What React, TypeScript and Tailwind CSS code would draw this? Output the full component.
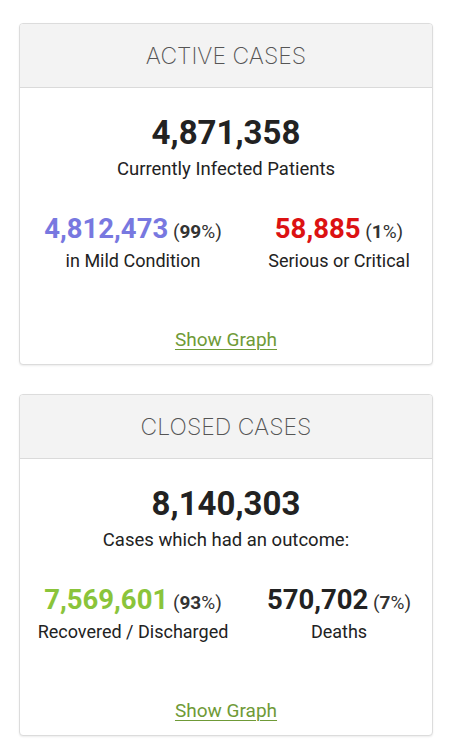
import React from "react";

type Stat = { value: string; pct: string; label: string; color: string };

function Card({
  title,
  total,
  totalLabel,
  left,
  right,
}: {
  title: string;
  total: string;
  totalLabel: string;
  left: Stat;
  right: Stat;
}) {
  const Col = ({ s }: { s: Stat }) => (
    <div className="flex flex-col items-center">
      <div className="leading-[32px] whitespace-nowrap">
        <span className="text-[27.5px] font-bold" style={{ color: s.color }}>
          {s.value}
        </span>
        <span className="text-[19px] text-[#333]">
          {" "}(<b className="font-bold">{s.pct}</b>%)
        </span>
      </div>
      <div className="text-[18px] leading-[24px] text-[#222]">{s.label}</div>
    </div>
  );
  return (
    <div className="ml-[19px] w-[414px] rounded-[4px] border border-[#dcdcdc] bg-white shadow-[0_1px_2px_rgba(0,0,0,0.08)] overflow-hidden">
      <div
        className="bg-[#f3f3f3] border-b border-[#dadada] pt-4 pb-[15px] text-center text-[23px] leading-8 font-extralight text-[#555]"
        style={{ fontFamily: "Inter, Roboto, 'Liberation Sans', sans-serif" }}
      >
        {title}
      </div>
      <div className="pt-[25px] pb-3 flex flex-col items-center">
        <div className="text-[33px] leading-[40px] font-bold text-[#222]">{total}</div>
        <div className="mt-1 text-[18.5px] leading-[24px] text-[#222]">{totalLabel}</div>
        <div className="mt-8 grid w-full grid-cols-[226px_186px]">
          <Col s={left} />
          <Col s={right} />
        </div>
        <a
          href="#"
          className="mt-[55px] text-[19px] leading-[24px] text-[#6f9a37] underline underline-offset-[3px] decoration-1"
        >
          Show Graph
        </a>
      </div>
    </div>
  );
}

export default function App() {
  return (
    <div
      className="min-h-[750px] bg-white pt-[23px] pb-4 flex flex-col gap-[29px]"
      style={{ fontFamily: "Roboto, 'Liberation Sans', sans-serif" }}
    >
      <Card
        title="ACTIVE CASES"
        total="4,871,358"
        totalLabel="Currently Infected Patients"
        left={{ value: "4,812,473", pct: "99", label: "in Mild Condition", color: "#7878e0" }}
        right={{ value: "58,885", pct: "1", label: "Serious or Critical", color: "#dc1212" }}
      />
      <Card
        title="CLOSED CASES"
        total="8,140,303"
        totalLabel="Cases which had an outcome:"
        left={{ value: "7,569,601", pct: "93", label: "Recovered / Discharged", color: "#8ac43a" }}
        right={{ value: "570,702", pct: "7", label: "Deaths", color: "#222" }}
      />
    </div>
  );
}
